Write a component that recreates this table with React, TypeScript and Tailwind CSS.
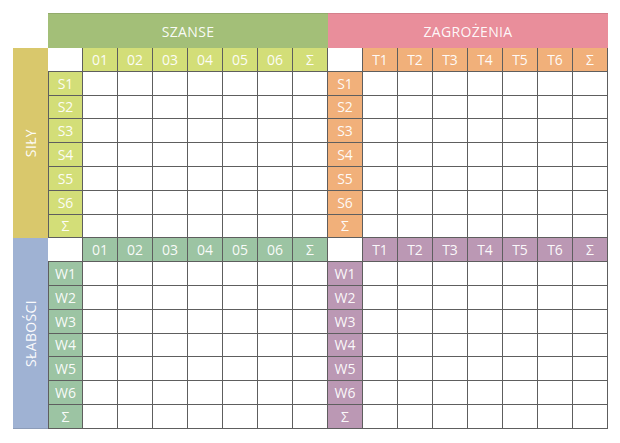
const cols = ["01", "02", "03", "04", "05", "06", "Σ"];
const threats = ["T1", "T2", "T3", "T4", "T5", "T6", "Σ"];
const strengths = ["S1", "S2", "S3", "S4", "S5", "S6", "Σ"];
const weaknesses = ["W1", "W2", "W3", "W4", "W5", "W6", "Σ"];

const cell = "border-r border-b border-[#5e5e5e] flex items-center justify-center text-[14px] text-white/95";

function HeaderRow({ left, right }: { left: string; right: string }) {
  return (
    <>
      <div className={`${cell} bg-white`} />
      {cols.map(c => (
        <div key={"l" + c} className={`${cell} ${left}`}>{c}</div>
      ))}
      <div className={`${cell} bg-white`} />
      {threats.map(c => (
        <div key={"r" + c} className={`${cell} ${right}`}>{c}</div>
      ))}
    </>
  );
}

function BodyRow({ label, left, right }: { label: string; left: string; right: string }) {
  return (
    <>
      <div className={`${cell} border-l ${left}`}>{label}</div>
      {cols.map(c => (
        <div key={"l" + c} className={`${cell} bg-white`} />
      ))}
      <div className={`${cell} ${right}`}>{label}</div>
      {threats.map(c => (
        <div key={"r" + c} className={`${cell} bg-white`} />
      ))}
    </>
  );
}

export default function App() {
  return (
    <div className="w-[620px] h-[443px] bg-white pt-[13px] pl-[13px] font-['Open_Sans','Liberation_Sans',sans-serif]">
      <div className="grid grid-cols-[repeat(17,35px)] grid-rows-[35px_repeat(16,23.8px)]">
        <div />
        <div className="col-span-8 bg-[#a3bf78] border-t border-[#93ab6c] flex items-center justify-center text-[14px] text-white/95 tracking-wide">
          SZANSE
        </div>
        <div className="col-span-8 bg-[#e98e9b] border-t border-[#d4808c] flex items-center justify-center text-[14px] text-white/95 tracking-wide">
          ZAGROŻENIA
        </div>

        <div className="row-span-8 bg-[#d9c86c] flex items-center justify-center">
          <span className="[writing-mode:vertical-rl] rotate-180 text-[14px] text-white/95 tracking-wide">SIŁY</span>
        </div>
        <HeaderRow left="bg-[#d3de78]" right="bg-[#f1b07a]" />
        {strengths.map(s => (
          <BodyRow key={s} label={s} left="bg-[#d3de78]" right="bg-[#f1b07a]" />
        ))}

        <div className="row-span-8 bg-[#9fb2d3] border-b border-[#8c9cb8] flex items-center justify-center">
          <span className="[writing-mode:vertical-rl] rotate-180 text-[14px] text-white/95 tracking-wide">SŁABOŚCI</span>
        </div>
        <HeaderRow left="bg-[#9cc4a3]" right="bg-[#bb98b4]" />
        {weaknesses.map(w => (
          <BodyRow key={w} label={w} left="bg-[#9cc4a3]" right="bg-[#bb98b4]" />
        ))}
      </div>
    </div>
  );
}
